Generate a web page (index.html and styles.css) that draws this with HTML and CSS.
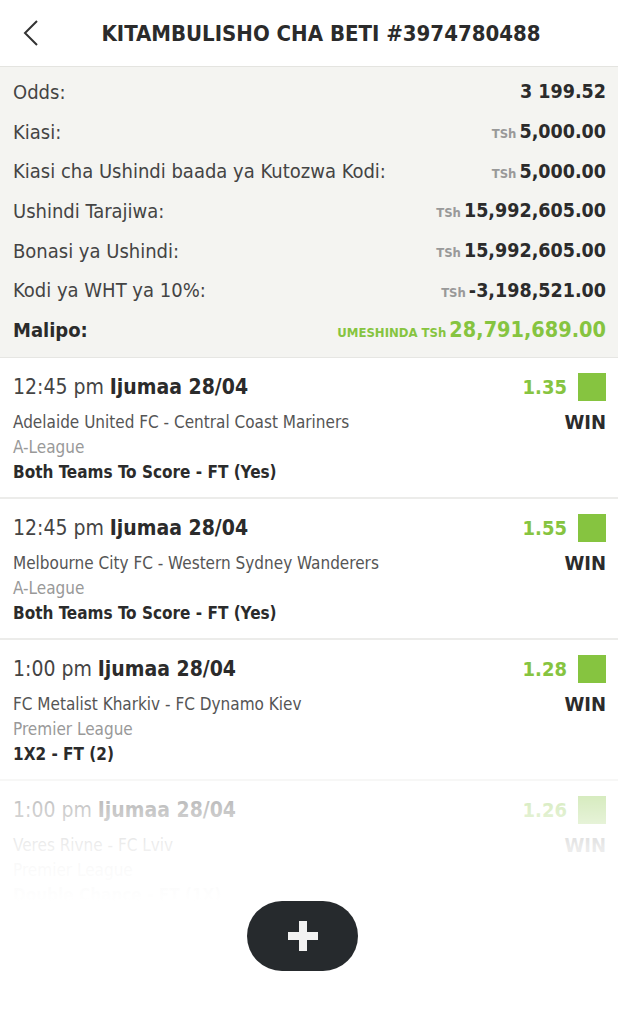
FILE: index.html
```html
<!DOCTYPE html>
<html lang="sw">
<head>
  <meta charset="UTF-8" />
  <meta name="viewport" content="width=device-width, initial-scale=1.0" />
  <title>Kitambulisho cha Beti</title>
  <link rel="stylesheet" href="styles.css">
</head>
<body>
  <header class="top-bar">
    <button class="back-btn" aria-label="Rudi">
      <svg width="18" height="28" viewBox="0 0 18 28"><path d="M15 2 L3 14 L15 26" fill="none" stroke="#333" stroke-width="2"/></svg>
    </button>
    <h1>KITAMBULISHO CHA BETI #3974780488</h1>
  </header>

  <section class="summary">
    <div class="row"><span>Odds:</span><strong>3 199.52</strong></div>
    <div class="row"><span>Kiasi:</span><strong><small>TSh</small>5,000.00</strong></div>
    <div class="row"><span>Kiasi cha Ushindi baada ya Kutozwa Kodi:</span><strong><small>TSh</small>5,000.00</strong></div>
    <div class="row"><span>Ushindi Tarajiwa:</span><strong><small>TSh</small>15,992,605.00</strong></div>
    <div class="row"><span>Bonasi ya Ushindi:</span><strong><small>TSh</small>15,992,605.00</strong></div>
    <div class="row"><span>Kodi ya WHT ya 10%:</span><strong><small>TSh</small>-3,198,521.00</strong></div>
    <div class="row payout"><span>Malipo:</span><strong><small>UMESHINDA TSh</small>28,791,689.00</strong></div>
  </section>

  <div class="bets">
    <div class="bet">
      <div class="bet-head">
        <div class="when">12:45 pm <b>Ijumaa 28/04</b></div>
        <div class="odd">1.35<i class="box"></i></div>
      </div>
      <div class="bet-body">
        <div>
          <div class="teams">Adelaide United FC - Central Coast Mariners</div>
          <div class="league">A-League</div>
          <div class="market">Both Teams To Score - FT (Yes)</div>
        </div>
        <div class="result">WIN</div>
      </div>
    </div>

    <div class="bet">
      <div class="bet-head">
        <div class="when">12:45 pm <b>Ijumaa 28/04</b></div>
        <div class="odd">1.55<i class="box"></i></div>
      </div>
      <div class="bet-body">
        <div>
          <div class="teams">Melbourne City FC - Western Sydney Wanderers</div>
          <div class="league">A-League</div>
          <div class="market">Both Teams To Score - FT (Yes)</div>
        </div>
        <div class="result">WIN</div>
      </div>
    </div>

    <div class="bet">
      <div class="bet-head">
        <div class="when">1:00 pm <b>Ijumaa 28/04</b></div>
        <div class="odd">1.28<i class="box"></i></div>
      </div>
      <div class="bet-body">
        <div>
          <div class="teams">FC Metalist Kharkiv - FC Dynamo Kiev</div>
          <div class="league">Premier League</div>
          <div class="market">1X2 - FT (2)</div>
        </div>
        <div class="result">WIN</div>
      </div>
    </div>

    <div class="bet">
      <div class="bet-head">
        <div class="when">1:00 pm <b>Ijumaa 28/04</b></div>
        <div class="odd">1.26<i class="box"></i></div>
      </div>
      <div class="bet-body">
        <div>
          <div class="teams">Veres Rivne - FC Lviv</div>
          <div class="league">Premier League</div>
          <div class="market">Double Chance - FT (1X)</div>
        </div>
        <div class="result">WIN</div>
      </div>
    </div>

    <div class="fade"></div>
  </div>

  <footer class="bottom">
    <button class="add-btn" aria-label="Ongeza">
      <svg width="32" height="32" viewBox="0 0 32 32"><path d="M12 1h8v11h11v8H20v11h-8V20H1v-8h11z" fill="#f2f2f2"/></svg>
    </button>
  </footer>
</body>
</html>
```

FILE: styles.css
```css
body {
  margin: 0;
  font-family: "DejaVu Sans Condensed", Roboto, sans-serif;
  color: #333;
  background: #fff;
}

.top-bar {
  display: flex;
  align-items: center;
  height: 66px;
  border-bottom: 1px solid #e4e4e0;
}

.back-btn {
  background: none;
  border: none;
  padding: 0 0 0 22px;
  width: 70px;
  display: flex;
}

.top-bar h1 {
  flex: 1;
  margin: 0;
  padding-right: 46px;
  text-align: center;
  font-size: 22px;
  font-weight: bold;
  color: #2b2b2b;
}

.summary {
  background: #f4f4f1;
  padding: 5px 12px 7px 13px;
  border-bottom: 1px solid #e6e6e3;
}

.row {
  display: flex;
  justify-content: space-between;
  align-items: center;
  height: 39.7px;
  font-size: 20px;
  color: #444;
}

.row strong {
  color: #2b2b2b;
  font-size: 19.5px;
}

.row small {
  font-size: 13px;
  color: #999;
  margin-right: 3px;
}

.payout span {
  font-weight: bold;
  color: #2b2b2b;
}

.payout strong,
.payout small {
  color: #86c440;
}

.payout strong {
  font-size: 21.5px;
}

.bets {
  position: relative;
  height: 543px;
  overflow: hidden;
}

.bet {
  height: 139px;
  padding: 0 12px 0 13px;
  border-bottom: 2px solid #ececea;
}

.bet-head {
  display: flex;
  justify-content: space-between;
  align-items: center;
  height: 58px;
}

.when {
  font-size: 21px;
  color: #444;
}

.when b {
  color: #2b2b2b;
}

.odd {
  display: flex;
  align-items: center;
  gap: 11px;
  font-size: 20px;
  font-weight: bold;
  color: #86c440;
}

.box {
  width: 28px;
  height: 28px;
  background: #86c440;
}

.bet-body {
  display: flex;
  justify-content: space-between;
  align-items: flex-start;
  margin-top: -6px;
}

.teams,
.league,
.market {
  font-size: 17px;
  line-height: 25px;
}

.teams {
  color: #555;
}

.league {
  color: #999;
}

.market {
  font-weight: bold;
  color: #2b2b2b;
}

.result {
  font-size: 20px;
  font-weight: bold;
  color: #2b2b2b;
  line-height: 25px;
}

.fade {
  position: absolute;
  left: 0;
  right: 0;
  bottom: 0;
  height: 130px;
  background: linear-gradient(rgba(255, 255, 255, 0.55), rgba(255, 255, 255, 0.9) 58%, rgba(255, 255, 255, 0.985) 88%, #fff);
}

.bottom {
  display: flex;
  justify-content: center;
}

.add-btn {
  width: 111px;
  height: 70px;
  margin-right: 13px;
  border: none;
  border-radius: 35px;
  background: #262a2d;
  display: flex;
  align-items: center;
  justify-content: center;
}
```
